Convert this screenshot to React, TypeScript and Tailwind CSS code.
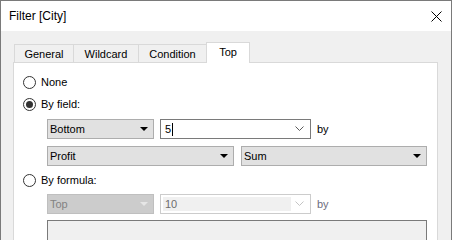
import type { ReactNode } from "react";

const Radio = ({ checked, label }: { checked?: boolean; label: string }) => (
  <div className="flex items-center h-[22px] pl-[9px]">
    <span className="w-[13px] h-[13px] rounded-full border border-[#333333] bg-white flex items-center justify-center">
      {checked && <span className="w-[7px] h-[7px] rounded-full bg-[#333333]" />}
    </span>
    <span className="ml-[5px]">{label}</span>
  </div>
);

const Tri = ({ color }: { color: string }) => (
  <svg width="8" height="4" viewBox="0 0 8 4">
    <path d="M0 0 L8 0 L4 4 Z" fill={color} />
  </svg>
);

const Chevron = ({ color }: { color: string }) => (
  <svg width="9" height="6" viewBox="0 0 9 6">
    <path d="M0.5 0.5 L4.5 4.5 L8.5 0.5" fill="none" stroke={color} strokeWidth="1" />
  </svg>
);

const Combo = ({ w, children, disabled }: { w: string; children: ReactNode; disabled?: boolean }) => (
  <div
    className={`${w} h-[20px] flex items-center justify-between pl-[2px] pr-[5px] border ${
      disabled ? "bg-[#cccccc] border-[#bfbfbf] text-[#838383]" : "bg-[#e1e1e1] border-[#adadad]"
    }`}
  >
    <span>{children}</span>
    <Tri color={disabled ? "#e6e6e6" : "#000000"} />
  </div>
);

export default function App() {
  return (
    <div
      className="w-[452px] h-[240px] overflow-hidden border-l border-t border-r border-[#7a7a7a] bg-[#f0f0f0] text-[11px] text-black"
      style={{ fontFamily: '"Liberation Sans", Arial, sans-serif' }}
    >
      {/* title bar */}
      <div className="h-[30px] bg-white flex items-center justify-between pl-[8px] pr-[9px]">
        <span className="text-[12px]">Filter [City]</span>
        <svg width="11" height="11" viewBox="0 0 11 11">
          <path d="M0.5 0.5 L10.5 10.5 M10.5 0.5 L0.5 10.5" stroke="#000" strokeWidth="1" />
        </svg>
      </div>

      {/* tabs */}
      <div className="flex items-end h-[21px] mt-[11px] ml-[13px] relative z-10">
        <div className="w-[59px] h-[19px] border-t border-l border-[#d9d9d9] flex items-center justify-center">General</div>
        <div className="w-[65px] h-[19px] border-t border-l border-[#d9d9d9] flex items-center justify-center">Wildcard</div>
        <div className="w-[68px] h-[19px] border-t border-l border-[#d9d9d9] flex items-center justify-center">Condition</div>
        <div className="w-[44px] h-[21px] border-t border-l border-r border-[#d9d9d9] bg-white flex items-center justify-center pb-[1px]">Top</div>
      </div>

      {/* panel */}
      <div className="ml-[12px] w-[425px] h-[200px] -mt-px border-l border-t border-r border-[#d9d9d9] bg-white pt-[8px]">
        <Radio label="None" />
        <Radio checked label="By field:" />

        <div className="ml-[33px] mt-[4px] flex items-center">
          <Combo w="w-[107px]">Bottom</Combo>
          <div className="ml-[6px] w-[151px] h-[20px] border border-[#7a7a7a] bg-white flex items-center justify-between pl-[4px] pr-[6px]">
            <span className="flex items-center">
              5<span className="ml-px w-px h-[13px] bg-black" />
            </span>
            <Chevron color="#5a5a5a" />
          </div>
          <span className="ml-[6px]">by</span>
        </div>

        <div className="ml-[33px] mt-[7px] flex items-center gap-[7px]">
          <Combo w="w-[187px]">Profit</Combo>
          <Combo w="w-[186px]">Sum</Combo>
        </div>

        <div className="mt-[3px]">
          <Radio label="By formula:" />
        </div>

        <div className="ml-[33px] mt-[3px] flex items-center">
          <Combo w="w-[107px]" disabled>
            Top
          </Combo>
          <div className="ml-[6px] w-[151px] h-[20px] border border-[#cccccc] bg-white flex items-center pl-[2px] pr-[6px]">
            <div className="w-[128px] h-[14px] bg-[#f0f0f0] flex items-center pl-[2px] text-[#6d6d6d]">10</div>
            <div className="flex-1 flex justify-end">
              <Chevron color="#c4c4c4" />
            </div>
          </div>
          <span className="ml-[6px] text-[#6d6d80]">by</span>
        </div>

        <div className="ml-[33px] mt-[6px] w-[380px] h-[40px] border border-[#7a7a7a] bg-[#f0f0f0]" />
      </div>
    </div>
  );
}
